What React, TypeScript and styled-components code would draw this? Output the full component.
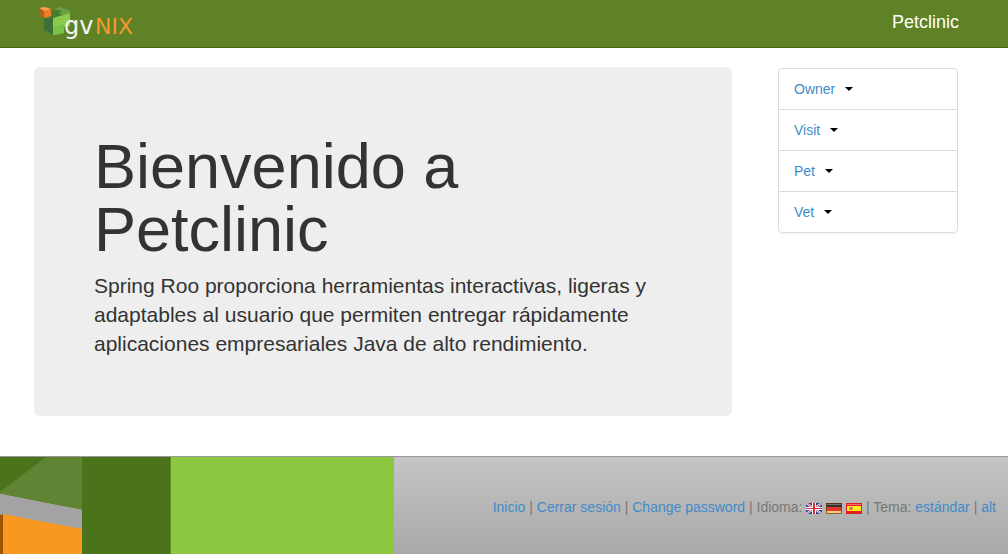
import React from 'react';
import styled, { createGlobalStyle } from 'styled-components';

const GlobalStyle = createGlobalStyle`
  * { box-sizing: border-box; }
  body {
    margin: 0;
    background: #fff;
    color: #333;
    font-family: "Liberation Sans", Arial, sans-serif;
    font-size: 14px;
    line-height: 20px;
  }
`;

const Header = styled.header`
  display: flex;
  justify-content: space-between;
  align-items: flex-start;
  height: 48px;
  padding: 0 49px 0 34px;
  background: #608226;
  border-bottom: 1px solid #466318;
`;

const LogoLink = styled.a`
  display: block;
  height: 44px;
`;

const Brand = styled.a`
  padding-top: 12px;
  color: #fff;
  font-size: 18px;
  line-height: 20px;
  text-decoration: none;
`;

const Columns = styled.div`
  display: flex;
  align-items: flex-start;
  gap: 46px;
  padding: 19px 50px 40px 34px;
`;

const Jumbotron = styled.main`
  flex: 1;
  min-width: 0;
  padding: 48px 60px;
  border-radius: 6px;
  background: #eee;
`;

const Title = styled.h1`
  margin: 20px 0 10px;
  font-size: 63px;
  font-weight: 400;
  line-height: 63px;
`;

const Lead = styled.p`
  margin: 0 0 10px;
  font-size: 21px;
  line-height: 29px;
`;

const Sidebar = styled.nav`
  flex: 0 0 180px;
  padding-top: 1px;
`;

const Menu = styled.ul`
  margin: 0;
  padding: 0;
  list-style: none;
  border: 1px solid #ddd;
  border-radius: 4px;
  box-shadow: 0 1px 2px rgba(0, 0, 0, 0.05);
`;

const MenuItem = styled.li`
  display: flex;
  align-items: center;
  gap: 10px;
  padding: 10px 15px;
  & + & { border-top: 1px solid #ddd; }
`;

const Link = styled.a`
  color: #428bca;
  text-decoration: none;
  &:hover { text-decoration: underline; }
`;

const CaretButton = styled.button`
  padding: 0;
  border: 4px solid transparent;
  border-top-color: #000;
  border-bottom: 0;
  width: 8px;
  height: 4px;
  background: none;
  cursor: pointer;
`;

const Footer = styled.footer`
  display: flex;
  justify-content: space-between;
  height: 98px;
  border-top: 1px solid #999;
  background: linear-gradient(#c5c5c5, #a8a8a8);
`;

const Artwork = styled.svg`
  display: block;
  flex: none;
`;

const FooterText = styled.div`
  padding: 40px 12px 37px 0;
  color: #777;
  white-space: nowrap;
`;

const FlagLink = styled.a`
  display: inline-block;
  width: 16px;
  height: 11px;
  vertical-align: -2px;
  svg { display: block; }
`;

const LogoText = styled.text`
  font-family: "DejaVu Sans", sans-serif;
  font-weight: 400;
`;

const Logo = () => (
  <svg width="106" height="44" viewBox="34 0 106 44" role="img" aria-label="gvNIX">
    <path d="M44 18l4 1 4-2v-5l2 6v17l-10-5z" fill="#3c7038" />
    <path d="M51 11l9-3 10 5-16 5-6-1 4-2z" fill="#457e30" />
    <path d="M54 9l6-2 10 4v3l-8 1-3-2 3-2-4-1z" fill="#68a03f" />
    <path d="M53 18l17-5v13l-6 1v6l-11 2z" fill="#8acb4c" />
    <path d="M53 27l11-3v9l-11 2z" fill="#7bc148" />
    <path d="M39 8l6-1 6 2-7 2z" fill="#ffa04c" />
    <path d="M39 8l5 3v7l-4-3z" fill="#bc5b1c" />
    <path d="M44 11l7-2v7l-7 2z" fill="#f07d28" />
    <LogoText x="64" y="34" fontSize="24" fill="#f4f4f4">gv</LogoText>
    <LogoText x="95" y="34" fontSize="22" fill="#f7982d">NIX</LogoText>
  </svg>
);

const FooterArt = () => (
  <Artwork width="394" height="97" viewBox="0 0 394 97" aria-hidden="true">
    <path d="M0 0h82v53L0 37z" fill="#608434" />
    <path d="M0 0h46L0 35z" fill="#4a731c" />
    <path d="M0 37l82 16v19L3 57 0 58z" fill="#a3a3a3" />
    <path d="M0 58l3-1v40H0z" fill="#9b5600" />
    <path d="M3 57l79 15v25H3z" fill="#f99820" />
    <path d="M82 0h89v97H82z" fill="#4a731c" />
    <path d="M171 0h223v97H171z" fill="#8dc63f" />
    <path d="M170 0h1v97h-1z" fill="#5f8c29" />
  </Artwork>
);

const BritishFlag = () => (
  <svg width="16" height="11" viewBox="0 0 16 11">
    <path fill="#24479b" d="M0 0h16v11H0z" />
    <path d="M0 0l16 11M16 0L0 11" stroke="#fff" strokeWidth="2" />
    <path d="M0 0l16 11M16 0L0 11" stroke="#e0566a" strokeWidth="1" />
    <path fill="#fff" d="M6 0h4v11H6zM0 4h16v3H0z" />
    <path fill="#d82b3a" d="M7 0h2v11H7zM0 5h16v1H0z" />
  </svg>
);

const GermanFlag = () => (
  <svg width="16" height="11" viewBox="0 0 16 11">
    <path fill="#333" d="M0 0h16v4H0z" />
    <path fill="#777" d="M1 1h14v1H1z" />
    <path fill="#e0392c" d="M0 4h16v4H0z" />
    <path fill="#f5cb80" d="M0 8h16v3H0z" />
    <path fill="none" stroke="#6a3510" strokeOpacity=".7" d="M.5 .5h15v10H.5z" />
  </svg>
);

const SpanishFlag = () => (
  <svg width="16" height="11" viewBox="0 0 16 11">
    <path fill="#e51d1d" d="M0 0h16v11H0z" />
    <path fill="#f57373" d="M1 1h14v1H1z" />
    <path fill="#ffed24" d="M1 3h14v5H1z" />
    <path fill="#d98a35" d="M3 4h1v3H3zM6 4h1v3H6z" />
    <path fill="#d8664a" d="M4 4h2v3H4z" />
    <path fill="#e9c4ab" d="M4 5h1v1H4z" />
  </svg>
);

const entities = ['Owner', 'Visit', 'Pet', 'Vet'];

export default function App() {
  return (
    <>
      <GlobalStyle />
      <Header>
        <LogoLink href="#"><Logo /></LogoLink>
        <Brand href="#">Petclinic</Brand>
      </Header>
      <Columns>
        <Jumbotron>
          <Title>Bienvenido a Petclinic</Title>
          <Lead>
            Spring Roo proporciona herramientas interactivas, ligeras y adaptables al usuario
            que permiten entregar rápidamente aplicaciones empresariales Java de alto rendimiento.
          </Lead>
        </Jumbotron>
        <Sidebar>
          <Menu>
            {entities.map((name) => (
              <MenuItem key={name}>
                <Link href="#">{name}</Link>
                <CaretButton type="button" aria-label={name} />
              </MenuItem>
            ))}
          </Menu>
        </Sidebar>
      </Columns>
      <Footer>
        <FooterArt />
        <FooterText>
          <Link href="#">Inicio</Link> | <Link href="#">Cerrar sesión</Link> |{' '}
          <Link href="#">Change password</Link> | Idioma:{' '}
          <FlagLink href="#" aria-label="English"><BritishFlag /></FlagLink>{' '}
          <FlagLink href="#" aria-label="Deutsch"><GermanFlag /></FlagLink>{' '}
          <FlagLink href="#" aria-label="Español"><SpanishFlag /></FlagLink>{' '}
          | Tema: <Link href="#">estándar</Link> | <Link href="#">alt</Link>
        </FooterText>
      </Footer>
    </>
  );
}
